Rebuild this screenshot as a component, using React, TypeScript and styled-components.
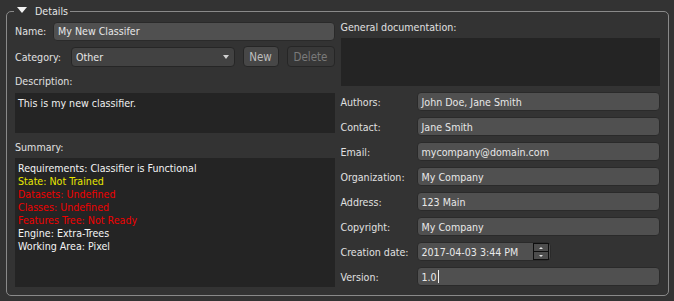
import React from 'react';
import styled, { createGlobalStyle } from 'styled-components';

const GlobalStyle = createGlobalStyle`
  html, body {
    margin: 0;
    padding: 0;
    background: #333333;
  }
  body {
    font-family: 'DejaVu Sans', 'Liberation Sans', sans-serif;
    font-stretch: condensed;
    font-size: 10.6px;
    color: #e0e0e0;
  }
`;

const summary: { text: string; tone: 'ok' | 'warn' | 'bad' }[] = [
  { text: 'Requirements: Classifier is Functional', tone: 'ok' },
  { text: 'State: Not Trained', tone: 'warn' },
  { text: 'Datasets: Undefined', tone: 'bad' },
  { text: 'Classes: Undefined', tone: 'bad' },
  { text: 'Features Tree: Not Ready', tone: 'bad' },
  { text: 'Engine: Extra-Trees', tone: 'ok' },
  { text: 'Working Area: Pixel', tone: 'ok' },
];

const fields = [
  { label: 'Authors:', value: 'John Doe, Jane Smith' },
  { label: 'Contact:', value: 'Jane Smith' },
  { label: 'Email:', value: 'mycompany@domain.com' },
  { label: 'Organization:', value: 'My Company' },
  { label: 'Address:', value: '123 Main' },
  { label: 'Copyright:', value: 'My Company' },
];

export default function App() {
  return (
    <Page>
      <GlobalStyle />
      <GroupBox>
        <GroupTitle>
          <Caret />
          <span>Details</span>
        </GroupTitle>

        <Columns>
          <Column>
            <InlineRow>
              <Label width={38}>Name:</Label>
              <TextInput>My New Classifer</TextInput>
            </InlineRow>

            <CategoryRow>
              <Label width={56}>Category:</Label>
              <Combo>
                <span>Other</span>
                <ComboArrow />
              </Combo>
              <Button width={36}>New</Button>
              <Button width={48} disabled>
                Delete
              </Button>
            </CategoryRow>

            <BlockLabel gap={8}>Description:</BlockLabel>
            <TextArea height={40}>
              <div>This is my new classifier.</div>
            </TextArea>

            <BlockLabel gap={8}>Summary:</BlockLabel>
            <TextArea grow gap={4}>
              {summary.map((line) => (
                <SummaryLine key={line.text} tone={line.tone}>
                  {line.text}
                </SummaryLine>
              ))}
            </TextArea>
          </Column>

          <Column>
            <BlockLabel gap={0}>General documentation:</BlockLabel>
            <TextArea height={48} gap={4} />

            <Form>
              {fields.map((f) => (
                <FormRow key={f.label}>
                  <FormLabel>{f.label}</FormLabel>
                  <TextInput>{f.value}</TextInput>
                </FormRow>
              ))}
              <FormRow>
                <FormLabel>Creation date:</FormLabel>
                <DateInput>
                  <span>2017-04-03 3:44 PM</span>
                  <Spin>
                    <SpinButton>
                      <SpinArrow up />
                    </SpinButton>
                    <SpinButton>
                      <SpinArrow />
                    </SpinButton>
                  </Spin>
                </DateInput>
              </FormRow>
              <FormRow>
                <FormLabel>Version:</FormLabel>
                <TextInput>
                  1.0
                  <TextCursor />
                </TextInput>
              </FormRow>
            </Form>
          </Column>
        </Columns>
      </GroupBox>
    </Page>
  );
}

const Page = styled.div`
  width: 674px;
  height: 301px;
  box-sizing: border-box;
  padding: 11px 5px 0 6px;
  overflow: hidden;
`;

const GroupBox = styled.div`
  position: relative;
  height: 285px;
  box-sizing: border-box;
  border: 1px solid #8a8a8a;
  border-radius: 5px;
  padding: 9px 8px 8px 8px;
  display: flex;
`;

const GroupTitle = styled.div`
  position: absolute;
  top: -8px;
  left: 7px;
  height: 14px;
  padding: 0 2px 0 3px;
  background: #333333;
  display: flex;
  align-items: center;
  gap: 8px;
  line-height: 14px;
  color: #e6e6e6;
`;

const Caret = styled.span`
  width: 0;
  height: 0;
  border-left: 5px solid transparent;
  border-right: 5px solid transparent;
  border-top: 6px solid #f2f2f2;
  margin-top: -3px;
`;

const Columns = styled.div`
  flex: 1;
  display: grid;
  grid-template-columns: 1fr 1fr;
  column-gap: 6px;
`;

const Column = styled.div`
  display: flex;
  flex-direction: column;
  min-width: 0;
`;

const InlineRow = styled.div`
  display: flex;
  align-items: center;
  height: 20px;
`;

const CategoryRow = styled(InlineRow)`
  margin-top: 5px;
  height: 21px;
  gap: 8px;
`;

const Label = styled.span<{ width: number }>`
  width: ${({ width }) => width}px;
  flex: none;
  margin-right: ${({ width }) => (width > 40 ? -8 : 0)}px;
  white-space: nowrap;
  color: #e0e0e0;
`;

const BlockLabel = styled.div<{ gap: number }>`
  margin-top: ${({ gap }) => gap}px;
  height: 13px;
  line-height: 13px;
  color: #e0e0e0;
`;

const TextInput = styled.div`
  flex: 1;
  height: 19px;
  box-sizing: border-box;
  display: flex;
  align-items: center;
  padding: 0 4px;
  background: #505050;
  border: 1px solid #2a2a2a;
  border-radius: 4px;
  color: #e8e8e8;
  white-space: nowrap;
`;

const Combo = styled.div`
  flex: 1;
  height: 20px;
  box-sizing: border-box;
  display: flex;
  align-items: center;
  justify-content: space-between;
  padding: 0 4px 0 4px;
  background: #424242;
  border: 1px solid #262626;
  border-radius: 4px;
  color: #e8e8e8;
`;

const ComboArrow = styled.span`
  width: 0;
  height: 0;
  border-left: 3.5px solid transparent;
  border-right: 3.5px solid transparent;
  border-top: 4px solid #d0d0d0;
  margin-right: 1px;
`;

const Button = styled.div<{ width: number; disabled?: boolean }>`
  width: ${({ width }) => width}px;
  height: 21px;
  box-sizing: border-box;
  display: flex;
  align-items: center;
  justify-content: center;
  border-radius: 4px;
  border: 1px solid #262626;
  background: ${({ disabled }) => (disabled ? '#383838' : '#474747')};
  color: ${({ disabled }) => (disabled ? '#7a7a7a' : '#bdbdbd')};
  font-size: 11.5px;
`;

const TextArea = styled.div<{ height?: number; grow?: boolean; gap?: number }>`
  margin-top: ${({ gap }) => (gap ?? 5)}px;
  height: ${({ height }) => (height ? `${height}px` : 'auto')};
  flex: ${({ grow }) => (grow ? 1 : 'none')};
  box-sizing: border-box;
  padding: 4px 3px;
  background: #242424;
  line-height: 13px;
  color: #f0f0f0;
`;

const toneColor = { ok: '#f4f4f4', warn: '#e8e800', bad: '#f00000' };

const SummaryLine = styled.div<{ tone: 'ok' | 'warn' | 'bad' }>`
  color: ${({ tone }) => toneColor[tone]};
  white-space: nowrap;
`;

const Form = styled.div`
  margin-top: 6px;
  display: flex;
  flex-direction: column;
  gap: 6px;
`;

const FormRow = styled.div`
  display: flex;
  align-items: center;
  height: 19px;
`;

const FormLabel = styled.span`
  width: 76px;
  flex: none;
  white-space: nowrap;
  color: #e0e0e0;
`;

const DateInput = styled(TextInput)`
  flex: none;
  width: 134px;
  justify-content: space-between;
  padding-right: 1px;
`;

const Spin = styled.div`
  width: 16px;
  height: 17px;
  box-sizing: border-box;
  border: 1px solid #0e0e0e;
  background: #0e0e0e;
  display: flex;
  flex-direction: column;
  gap: 1px;
`;

const SpinButton = styled.div`
  flex: 1;
  background: #4d4d4d;
  display: flex;
  align-items: center;
  justify-content: center;
`;

const SpinArrow = styled.span<{ up?: boolean }>`
  width: 0;
  height: 0;
  border-left: 2px solid transparent;
  border-right: 2px solid transparent;
  ${({ up }) => (up ? 'border-bottom: 2px solid #e0e0e0;' : 'border-top: 2px solid #e0e0e0;')}
`;

const TextCursor = styled.span`
  display: inline-block;
  width: 1px;
  height: 13px;
  margin-left: 1px;
  background: #f0f0f0;
`;
